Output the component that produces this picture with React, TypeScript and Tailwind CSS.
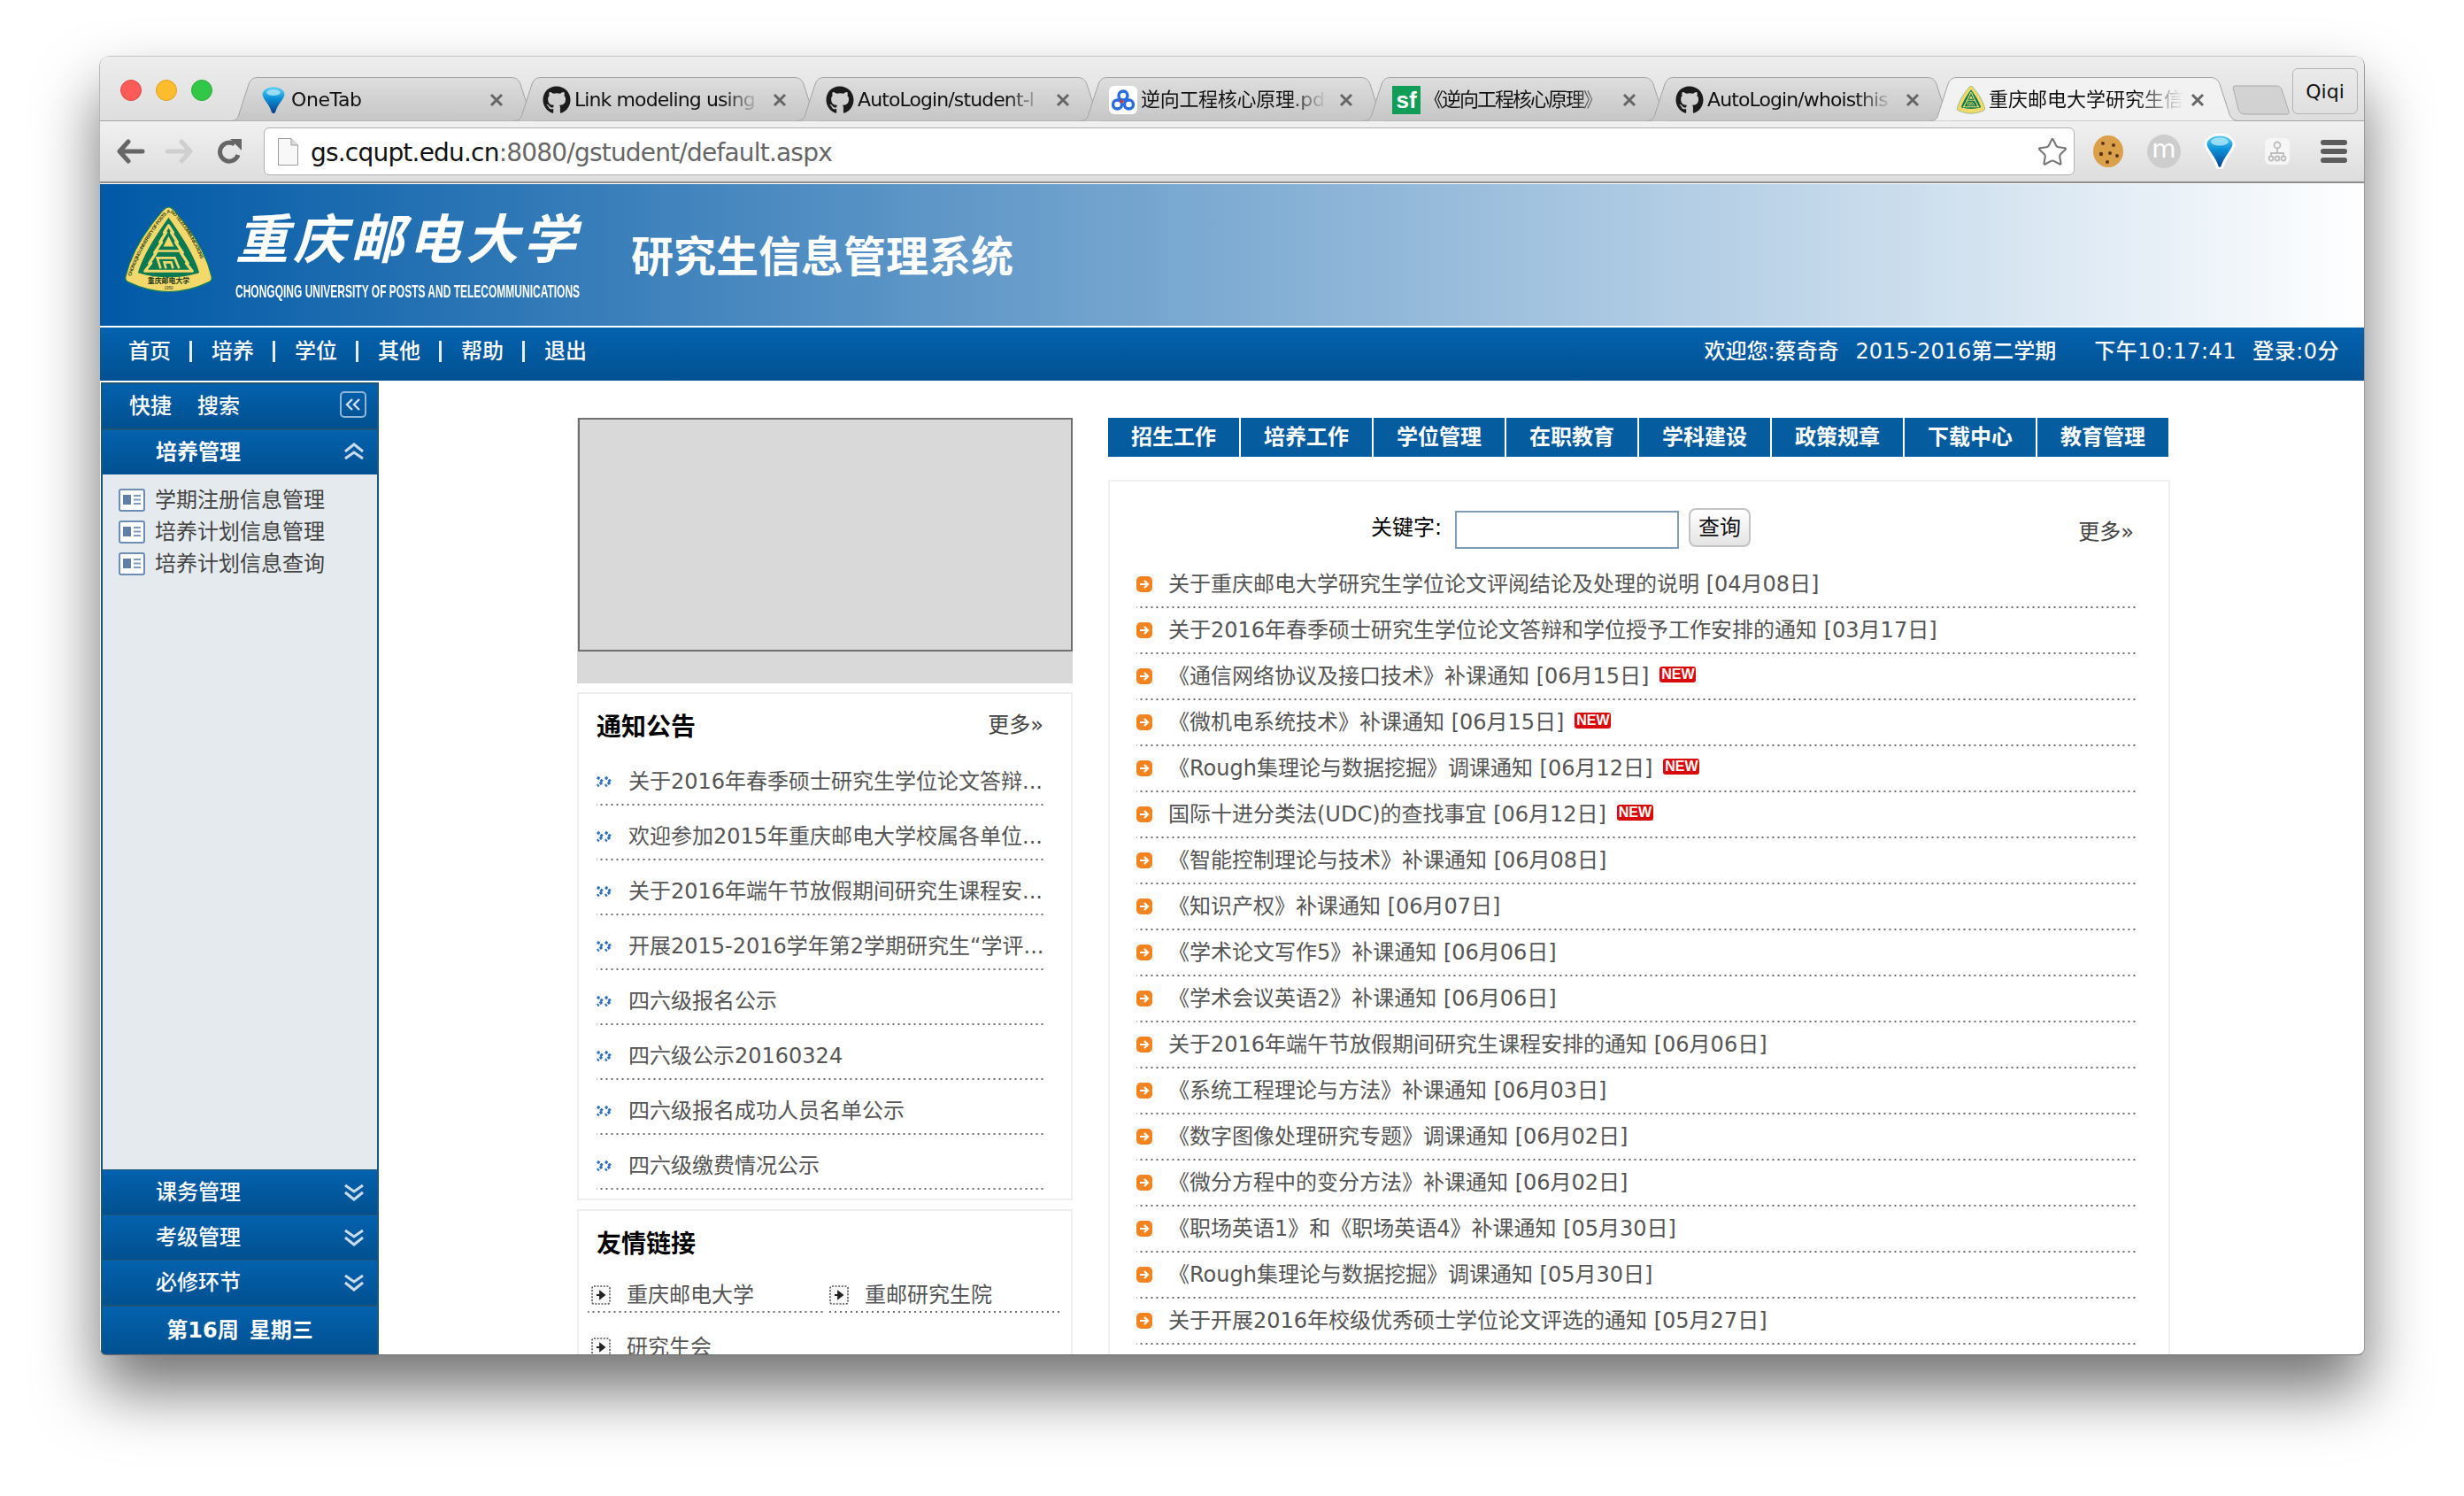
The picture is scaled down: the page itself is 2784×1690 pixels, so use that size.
import type { ReactNode } from 'react';
import { Star } from 'lucide-react';
import { FaGithub } from 'react-icons/fa';

const tabs = [
  { title: 'OneTab', icon: 'onetab', tight: 'tracking-[-0.4px]' },
  { title: 'Link modeling using', icon: 'github', tight: 'tracking-[-0.9px]' },
  { title: 'AutoLogin/student-l', icon: 'github', tight: 'tracking-[-0.9px]' },
  { title: '逆向工程核心原理.pdf', icon: 'baidu', tight: 'tracking-[-0.3px]' },
  { title: '《逆向工程核心原理》', icon: 'sf', tight: 'tracking-[-2px]' },
  { title: 'AutoLogin/whoisthis', icon: 'github', tight: 'tracking-[-0.9px]' },
];

const topMenu = ['首页', '培养', '学位', '其他', '帮助', '退出'];
const sideItems = ['学期注册信息管理', '培养计划信息管理', '培养计划信息查询'];
const sideGroups = ['课务管理', '考级管理', '必修环节'];
const blueTabs = ['招生工作', '培养工作', '学位管理', '在职教育', '学科建设', '政策规章', '下载中心', '教育管理'];

const notices = [
  '关于2016年春季硕士研究生学位论文答辩...',
  '欢迎参加2015年重庆邮电大学校属各单位...',
  '关于2016年端午节放假期间研究生课程安...',
  '开展2015-2016学年第2学期研究生“学评...',
  '四六级报名公示',
  '四六级公示20160324',
  '四六级报名成功人员名单公示',
  '四六级缴费情况公示',
];

const news = [
  { text: '关于重庆邮电大学研究生学位论文评阅结论及处理的说明 [04月08日]' },
  { text: '关于2016年春季硕士研究生学位论文答辩和学位授予工作安排的通知 [03月17日]' },
  { text: '《通信网络协议及接口技术》补课通知 [06月15日]', isNew: true },
  { text: '《微机电系统技术》补课通知 [06月15日]', isNew: true },
  { text: '《Rough集理论与数据挖掘》调课通知 [06月12日]', isNew: true },
  { text: '国际十进分类法(UDC)的查找事宜 [06月12日]', isNew: true },
  { text: '《智能控制理论与技术》补课通知 [06月08日]' },
  { text: '《知识产权》补课通知 [06月07日]' },
  { text: '《学术论文写作5》补课通知 [06月06日]' },
  { text: '《学术会议英语2》补课通知 [06月06日]' },
  { text: '关于2016年端午节放假期间研究生课程安排的通知 [06月06日]' },
  { text: '《系统工程理论与方法》补课通知 [06月03日]' },
  { text: '《数字图像处理研究专题》调课通知 [06月02日]' },
  { text: '《微分方程中的变分方法》补课通知 [06月02日]' },
  { text: '《职场英语1》和《职场英语4》补课通知 [05月30日]' },
  { text: '《Rough集理论与数据挖掘》调课通知 [05月30日]' },
  { text: '关于开展2016年校级优秀硕士学位论文评选的通知 [05月27日]' },
];

const dots = 'bg-[linear-gradient(to_right,#6e6e6e_2px,transparent_2px)] bg-[length:6px_2px] bg-bottom bg-repeat-x';

// school emblem, also used as the favicon of the active tab
const Seal = ({ size, detail = true }: { size: number; detail?: boolean }) => (
  <svg width={size} height={size} viewBox="0 0 100 100" className="shrink-0">
    <path d="M50 1 C54 1 57 5 60 9 C78 30 93 55 99 80 C100 84 98 86 95 87 C66 101 34 101 5 87 C2 86 0 84 1 80 C7 55 22 30 40 9 C43 5 46 1 50 1Z" fill="#f3d96b" stroke="#0f7d58" strokeWidth="1.2" />
    <path d="M50 13 C60 27 79 54 85 76 C62 83 38 83 15 76 C21 54 40 27 50 13Z" fill="#0a7a52" />
    <path d="M50 22 L55 30 L53 30 L60 41 L58 41 L66 53 L64 53 L72 65 L70 65 L77 74 L23 74 L30 65 L28 65 L36 53 L34 53 L42 41 L40 41 L47 30 L45 30Z" fill="#0a7a52" stroke="#f3d96b" strokeWidth="3.2" strokeLinejoin="round" />
    <path d="M50 34 L56 46 L44 46Z" fill="#f3d96b" />
    <path d="M36 51 H64 M41 71 L37 59 H57 L62 71 M47 71 L45 64 H53 L55 71" fill="none" stroke="#f3d96b" strokeWidth="2.6" />
    {detail && (
      <>
        <path id="sealText" d="M7 80 C16 54 30 30 47 10 C52 5 56 10 60 15 C74 32 87 56 93 80" fill="none" />
        <text fontSize="5.6" fontWeight="700" fill="#3b4a20" fontFamily="Liberation Sans, sans-serif" textLength="150">
          <textPath href="#sealText">CHONGQING UNIVERSITY OF POSTS AND TELECOMMUNICATIONS</textPath>
        </text>
        <text x="50" y="88" textAnchor="middle" fontSize="8" fontWeight="700" fill="#23381c" fontFamily="Noto Sans CJK SC, sans-serif">重庆邮电大学</text>
        <text x="50" y="95" textAnchor="middle" fontSize="4.6" fill="#23381c" fontFamily="Liberation Sans, sans-serif">1950</text>
      </>
    )}
  </svg>
);

// blue OneTab funnel
const Funnel = ({ gid, width, height, outline = false }: { gid: string; width: number; height: number; outline?: boolean }) => (
  <svg width={width} height={height} viewBox="0 0 36 40" className="shrink-0">
    <defs>
      <linearGradient id={gid} x1="0" y1="0" x2="0" y2="1">
        <stop offset="0" stopColor="#5fd0f5" />
        <stop offset="0.45" stopColor="#0a8fd8" />
        <stop offset="1" stopColor="#0a3f86" />
      </linearGradient>
    </defs>
    <path d="M18 1 C27 1 34 6 34 12 C34 18 24 26 21 37 C20 40 16 40 15 37 C12 26 2 18 2 12 C2 6 9 1 18 1Z" fill={`url(#${gid})`} stroke={outline ? '#fff' : 'none'} strokeWidth={outline ? 3 : 0} />
    <ellipse cx="18" cy="9" rx="10" ry="4.5" fill="#b8ecfb" opacity="0.75" />
  </svg>
);

const TabIcon = ({ kind }: { kind: string }) => {
  if (kind === 'onetab')
    return (
      <div className="w-[32px] flex justify-center shrink-0">
        <Funnel gid="tabFunnel" width={28} height={32} />
      </div>
    );
  if (kind === 'github') return <FaGithub className="w-[32px] h-[32px] text-[#1b1b1b] shrink-0" />;
  if (kind === 'baidu')
    return (
      <div className="w-[32px] h-[32px] bg-white rounded-md flex items-center justify-center shrink-0">
        <svg width="28" height="26" viewBox="0 0 28 26" fill="none">
          <circle cx="14" cy="8" r="5" stroke="#2a6be0" strokeWidth="3.4" />
          <circle cx="7.5" cy="18" r="5" stroke="#2a6be0" strokeWidth="3.4" />
          <circle cx="20.5" cy="18" r="5" stroke="#2a6be0" strokeWidth="3.4" />
          <path d="M11 13 L14 16" stroke="#e0352b" strokeWidth="2.6" />
        </svg>
      </div>
    );
  return (
    <div className="w-[32px] h-[32px] bg-[#0f9d58] flex items-center justify-center shrink-0 text-white text-[26px] font-bold leading-none font-['Liberation_Sans',sans-serif]">sf</div>
  );
};

const TabClose = () => (
  <svg width="16" height="16" viewBox="0 0 16 16" className="shrink-0">
    <path d="M2 2 L14 14 M14 2 L2 14" stroke="#666" strokeWidth="3" />
  </svg>
);

const TabShape = ({ active = false }: { active?: boolean }) => (
  <svg width="350" height="50" viewBox="0 0 350 50" className="absolute left-0 top-0">
    <defs>
      <linearGradient id={active ? 'tabOn' : 'tabOff'} x1="0" y1="0" x2="0" y2="1">
        <stop offset="0" stopColor={active ? '#f2f2f2' : '#dedede'} />
        <stop offset="1" stopColor={active ? '#f1f1f1' : '#c6c6c6'} />
      </linearGradient>
    </defs>
    <path d="M0 49.5 C5 49.5 8 47 9 42 L20 8 C22 3 25 0.5 30 0.5 L316 0.5 C322 0.5 325 3 327 8 L338 42 C340 47 343 49.5 349 49.5" fill={`url(#${active ? 'tabOn' : 'tabOff'})`} stroke="#a2a2a2" strokeWidth="1" />
  </svg>
);

const DoubleChevron = ({ up = false }: { up?: boolean }) => (
  <svg width="22" height="20" viewBox="0 0 22 20" fill="none" stroke="#c9dcec" strokeWidth="3" className={up ? 'rotate-180' : ''}>
    <path d="M1 2 L11 9 L21 2" />
    <path d="M1 10 L11 18 L21 10" />
  </svg>
);

const DocIcon = () => (
  <svg width="30" height="26" viewBox="0 0 30 26" className="shrink-0">
    <rect x="1" y="1" width="28" height="24" rx="2" fill="#fff" stroke="#6e8db5" strokeWidth="2" />
    <rect x="5" y="7" width="9" height="11" fill="#5f7ea8" />
    <path d="M17 8 H25 M17 12.500 H25 M17 17 H25" stroke="#7f9ac0" strokeWidth="2" />
  </svg>
);

const BlueBullet = () => (
  <svg width="18" height="14" viewBox="0 0 18 14" fill="none" stroke="#2f6fc0" strokeWidth="3.2" strokeDasharray="3 1.5" className="shrink-0">
    <path d="M1 2 L7 7 L1 12" />
    <path d="M10 2 L16 7 L10 12" />
  </svg>
);

const LinkBullet = () => (
  <svg width="22" height="22" viewBox="0 0 22 22" className="shrink-0">
    <rect x="1" y="1" width="20" height="20" rx="2" fill="#f8f8f8" stroke="#555" strokeWidth="1.6" strokeDasharray="2 1.6" />
    <path d="M6 11 H12 M10 7 L15 11 L10 15Z" stroke="#222" strokeWidth="1.8" fill="#222" />
  </svg>
);

const OrangeBullet = () => (
  <svg width="18" height="18" viewBox="0 0 18 18" className="shrink-0">
    <rect width="18" height="18" rx="5" fill="#ef8421" />
    <path d="M4 9 H12 M9 5 L13 9 L9 13" stroke="#fff" strokeWidth="2.2" fill="none" />
  </svg>
);

const SideBar = ({ children }: { children: ReactNode }) => (
  <div className="relative h-[50px] shrink-0 flex items-center bg-gradient-to-b from-[#0462ae] to-[#01508f] text-white">{children}</div>
);

export default function App() {
  return (
    <div className="w-full h-[1690px] bg-white pt-[63px] pl-[112px] overflow-hidden font-['DejaVu_Sans','Noto_Sans_CJK_SC',sans-serif]">
      <div className="w-[2560px] h-[1468px] flex flex-col rounded-t-xl rounded-b-lg overflow-hidden bg-white border-l border-l-[#b8b8b8] border-r border-r-[#999999] border-b border-b-[#707070] shadow-[0_40px_70px_rgba(0,0,0,0.55)]">
        {/* tab strip */}
        <div className="h-[74px] shrink-0 flex items-end relative border-t border-[#c4c4c4] bg-gradient-to-b from-[#ededed] to-[#dedede] border-b border-b-[#a2a2a2]">
          <div className="absolute left-[23px] top-[26px] flex gap-[16px]">
            <div className="w-[24px] h-[24px] rounded-full bg-[#fc5b57] border border-[#e2463f]" />
            <div className="w-[24px] h-[24px] rounded-full bg-[#fdbb2e] border border-[#e0a028]" />
            <div className="w-[24px] h-[24px] rounded-full bg-[#33c748] border border-[#2aac3a]" />
          </div>
          <div className="flex ml-[148px] h-[50px] -mb-px">
            {tabs.map((tab, i) => (
              <div key={i} className="relative w-[320px] shrink-0 h-[50px]">
                <TabShape />
                <div className="absolute left-[32px] top-[10px] w-[292px] h-[32px] flex items-center">
                  <TabIcon kind={tab.icon} />
                  <span className={`ml-[4px] w-[210px] text-[22px] leading-[32px] text-[#111] whitespace-nowrap overflow-hidden [mask-image:linear-gradient(to_right,#000_80%,transparent)] ${tab.tight}`}>{tab.title}</span>
                  <span className="ml-auto mr-[16px]"><TabClose /></span>
                </div>
              </div>
            ))}
            <div className="relative w-[346px] shrink-0 h-[50px]">
              <TabShape active />
              <div className="absolute left-[30px] top-[10px] w-[290px] h-[32px] flex items-center">
                <Seal size={32} detail={false} />
                <span className="ml-[4px] w-[220px] text-[22px] leading-[32px] text-[#111] whitespace-nowrap overflow-hidden [mask-image:linear-gradient(to_right,#000_75%,transparent)]">重庆邮电大学研究生信</span>
                <span className="ml-auto mr-[10px]"><TabClose /></span>
              </div>
            </div>
          </div>
          <svg width="66" height="34" viewBox="0 0 66 34" className="absolute left-[2409px] top-[32px]">
            <path d="M1 3 C1 1 3 1 5 1 L50 1 C54 1 55 3 56 5 L64 30 C65 33 63 33 60 33 L16 33 C10 33 8 31 7 27Z" fill="#d2d2d2" stroke="#a8a8a8" />
          </svg>
          <div className="absolute left-[2477px] top-[13px] w-[74px] h-[52px] rounded-md border border-[#b5b5b5] flex items-center justify-center text-[22px] text-[#111]">Qiqi</div>
        </div>

        {/* address bar */}
        <div className="h-[70px] shrink-0 flex items-center bg-gradient-to-b from-[#f1f1f1] to-[#dddddd] border-b-2 border-[#8e8e8e]">
          <div className="flex items-center w-[185px] pl-[19px] gap-[22px]">
            <svg width="32" height="28" viewBox="0 0 32 28" fill="none" stroke="#666" strokeWidth="5" strokeLinecap="round" strokeLinejoin="round">
              <path d="M29 14 H4 M13 3 L3 14 L13 25" />
            </svg>
            <svg width="32" height="28" viewBox="0 0 32 28" fill="none" stroke="#cfcfcf" strokeWidth="5" strokeLinecap="round" strokeLinejoin="round">
              <path d="M3 14 H28 M19 3 L29 14 L19 25" />
            </svg>
            <svg width="28" height="30" viewBox="0 0 28 30" fill="none" className="ml-[6px]">
              <path d="M23 19 A10.500 10.500 0 1 1 19 7" stroke="#666" strokeWidth="5" />
              <path d="M14 1 L27 1 L27 14Z" fill="#666" />
            </svg>
          </div>
          <div className="relative w-[2046px] h-[54px] bg-white rounded-md border border-[#b2b2b2] flex items-center pl-[15px]">
            <svg width="23" height="31" viewBox="0 0 23 31" className="shrink-0">
              <path d="M0.500 0.500 H15 L22.500 8 V30.500 H0.500Z" fill="#f8f8f8" stroke="#9c9c9c" />
              <path d="M15 0.500 V8 H22.500" fill="#ddd" stroke="#9c9c9c" />
            </svg>
            <span className="ml-[14px] mt-[3px] text-[28px] text-[#111] leading-none tracking-[-0.8px]">gs.cqupt.edu.cn<span className="text-[#666]">:8080/gstudent/default.aspx</span></span>
            <Star className="absolute right-[6px] top-[9px] w-[36px] h-[36px] text-[#777]" strokeWidth={1.4} fill="#fff" />
          </div>
          <div className="flex items-center ml-[20px] gap-[26px]">
            <svg width="36" height="38" viewBox="0 0 36 38">
              <ellipse cx="18" cy="19" rx="17" ry="18" fill="#dba04a" />
              <circle cx="12" cy="10" r="2" fill="#5b3418" /><circle cx="24" cy="12" r="2" fill="#5b3418" /><circle cx="10" cy="22" r="2.200" fill="#5b3418" /><circle cx="20" cy="21" r="2" fill="#5b3418" /><circle cx="28" cy="24" r="2" fill="#5b3418" /><circle cx="17" cy="31" r="2" fill="#5b3418" />
            </svg>
            <div className="w-[38px] h-[38px] rounded-full bg-[#cdcdcd] flex items-center justify-center text-white text-[28px] leading-none pb-[4px]">m</div>
            <Funnel gid="barFunnel" width={36} height={40} outline />
            <div className="w-[28px] h-[30px] ml-[7px] rounded-md bg-[#f6f6f6] flex items-center justify-center">
              <svg width="22" height="24" viewBox="0 0 22 24" fill="none" stroke="#bdbdbd" strokeWidth="1.800">
                <circle cx="11" cy="5" r="3.500" /><path d="M11 9 V14 M4 18 V14 H18 V18" /><circle cx="4" cy="20" r="2.500" /><circle cx="11" cy="20" r="2.500" /><circle cx="18" cy="20" r="2.500" />
              </svg>
            </div>
            <div className="flex flex-col gap-[4px] ml-[9px]">
              <div className="w-[30px] h-[6px] rounded-full bg-[#5c5c5c]" />
              <div className="w-[30px] h-[6px] rounded-full bg-[#5c5c5c]" />
              <div className="w-[30px] h-[6px] rounded-full bg-[#5c5c5c]" />
            </div>
          </div>
        </div>

        {/* school banner */}
        <div className="h-[160px] shrink-0 flex items-start pl-[28px] bg-linear-to-r/srgb from-[#0059a6] to-white mt-[1px]">
          <div className="mt-[25px]"><Seal size={99} /></div>
          <div className="ml-[26px] mt-[15px] w-[390px] text-white">
            <div className="text-[60px] leading-[96px] tracking-[5px] font-bold italic whitespace-nowrap">重庆邮电大学</div>
            <div className="text-[20px] leading-[20px] font-bold whitespace-nowrap origin-left scale-x-[0.6] font-['Liberation_Sans',sans-serif]">CHONGQING UNIVERSITY OF POSTS AND TELECOMMUNICATIONS</div>
          </div>
          <div className="ml-[57px] mt-[46px] text-[48px] leading-[72px] font-bold text-white whitespace-nowrap">研究生信息管理系统</div>
        </div>

        {/* top nav */}
        <div className="h-[60px] shrink-0 mt-[2px] flex items-center justify-between pl-[32px] pr-[28px] pb-[6px] text-white text-[24px] font-medium bg-gradient-to-b from-[#0462ae] to-[#015192]">
          <div className="flex items-center">
            {topMenu.map((item, i) => (
              <div key={item} className="flex items-center">
                <span className="w-[48px]">{item}</span>
                {i < topMenu.length - 1 && <span className="w-[3px] h-[24px] bg-[#e6eef5] ml-[21px] mr-[22px]" />}
              </div>
            ))}
          </div>
          <div className="flex items-center whitespace-nowrap">
            <span>欢迎您:蔡奇奇</span>
            <span className="ml-[19px]">2015-2016第二学期</span>
            <span className="ml-[43px] tracking-[0.5px]">下午10:17:41</span>
            <span className="ml-[18px] tracking-[0.5px]">登录:0分</span>
          </div>
        </div>

        {/* page body */}
        <div className="flex-1 min-h-0 flex items-stretch pt-[2px] overflow-hidden">
          <aside className="w-[314px] ml-[1px] shrink-0 flex flex-col gap-[2px] bg-[#1f5675] border-x-2 border-t-2 border-[#1f5675] text-[24px] font-medium">
            <SideBar>
              <span className="ml-[30px]">快捷</span>
              <span className="ml-[29px]">搜索</span>
              <div className="absolute right-[12px] top-[8px] w-[30px] h-[30px] rounded-[5px] border-2 border-[#8fb6d6] flex items-center justify-center">
                <svg width="18" height="14" viewBox="0 0 18 14" fill="none" stroke="#cfe0ee" strokeWidth="2.4">
                  <path d="M8 1 L2 7 L8 13 M16 1 L10 7 L16 13" />
                </svg>
              </div>
            </SideBar>
            <SideBar>
              <span className="ml-[60px] font-bold">培养管理</span>
              <div className="absolute right-[15px] top-[14px]"><DoubleChevron up /></div>
            </SideBar>
            <div className="flex-1 -mt-[2px] bg-[#e4eaee] pt-[11px] pl-[18px] text-[#444] font-normal">
              {sideItems.map((item) => (
                <div key={item} className="h-[36px] flex items-center gap-[11px]">
                  <DocIcon />
                  <span>{item}</span>
                </div>
              ))}
            </div>
            {sideGroups.map((group) => (
              <div key={group} className="-mt-px first:mt-0">
                <SideBar>
                  <span className="ml-[60px]">{group}</span>
                  <div className="absolute right-[15px] top-[15px]"><DoubleChevron /></div>
                </SideBar>
              </div>
            ))}
            <div className="h-[54px] shrink-0 flex items-center justify-center bg-gradient-to-b from-[#0462ae] to-[#01508f] text-white font-bold">
              <span>第16周</span>
              <span className="ml-[12px]">星期三</span>
            </div>
          </aside>

          <main className="flex-1 min-w-0 flex items-start pl-[224px] pt-[40px] overflow-hidden">
            {/* left column */}
            <div className="w-[560px] shrink-0">
              <div className="h-[300px] bg-[#d9d9d9]">
                <div className="h-[264px] ml-[1px] border-2 border-[#707070]" />
              </div>
              <section className="mt-[10px] border-2 border-[#eeeeee] pl-[20px] pr-[29px] h-[574px]">
                <div className="flex items-center justify-between h-[64px] pt-[12px] pr-[2px]">
                  <h2 className="text-[28px] font-bold text-black">通知公告</h2>
                  <a className="text-[24px] text-[#444] -mt-[6px]">更多»</a>
                </div>
                {notices.map((n) => (
                  <div key={n} className={`h-[62px] flex items-center gap-[18px] pb-[2px] pt-[10px] text-[24px] text-[#555] whitespace-nowrap ${dots}`}>
                    <BlueBullet />
                    <span>{n}</span>
                  </div>
                ))}
              </section>
              <section className="mt-[10px] border-2 border-[#eeeeee] px-[10px] h-[200px]">
                <h2 className="h-[76px] flex items-center pl-[10px] text-[28px] font-bold text-black">友情链接</h2>
                <div className="grid grid-cols-[269px_266px] text-[24px] text-[#555]">
                  <div className={`h-[39px] flex items-center gap-[18px] pl-[4px] pb-[2px] ${dots}`}>
                    <LinkBullet />
                    <span>重庆邮电大学</span>
                  </div>
                  <div className={`h-[39px] flex items-center gap-[18px] pl-[4px] pb-[2px] ${dots}`}>
                    <LinkBullet />
                    <span>重邮研究生院</span>
                  </div>
                  <div className={`h-[80px] flex items-center gap-[18px] pl-[4px] pb-[2px] ${dots}`}>
                    <LinkBullet />
                    <span>研究生会</span>
                  </div>
                </div>
              </section>
            </div>

            {/* right column */}
            <div className="w-[1200px] shrink-0 ml-[40px]">
              <div className="flex gap-[2px]">
                {blueTabs.map((t) => (
                  <div key={t} className="w-[148px] h-[44px] bg-[#055c9f] text-white font-bold text-[24px] flex items-center justify-center">{t}</div>
                ))}
              </div>
              <section className="mt-[26px] border-2 border-[#f0f0f0] h-[1000px] pl-[30px] pr-[35px]">
                <div className="relative flex items-center h-[91px] pt-[18px] text-[24px]">
                  <span className="ml-[265px] -mt-[5px] text-black">关键字:</span>
                  <div className="ml-[15px] w-[253px] h-[43px] border-2 border-[#7f9db9] bg-white" />
                  <div className="ml-[11px] w-[70px] h-[44px] rounded-lg border-2 border-[#c4c4c4] bg-gradient-to-b from-white to-[#e4e4e4] flex items-center justify-center text-[#111] -mt-[6px]">查询</div>
                  <a className="absolute right-[4px] top-[39px] text-[#444]">更多»</a>
                </div>
                {news.map((row) => (
                  <div key={row.text} className={`h-[52px] flex items-center pb-[2px] text-[24px] text-[#555] whitespace-nowrap ${dots}`}>
                    <OrangeBullet />
                    <span className="ml-[18px]">{row.text}</span>
                    {row.isNew && <span className="ml-[12px] -mt-[5px] w-[41px] h-[18px] rounded-[3px] bg-[#d90a0a] text-white text-[16px] leading-[18px] font-bold text-center font-['Liberation_Sans',sans-serif]">NEW</span>}
                  </div>
                ))}
              </section>
            </div>
          </main>
        </div>
      </div>
    </div>
  );
}
